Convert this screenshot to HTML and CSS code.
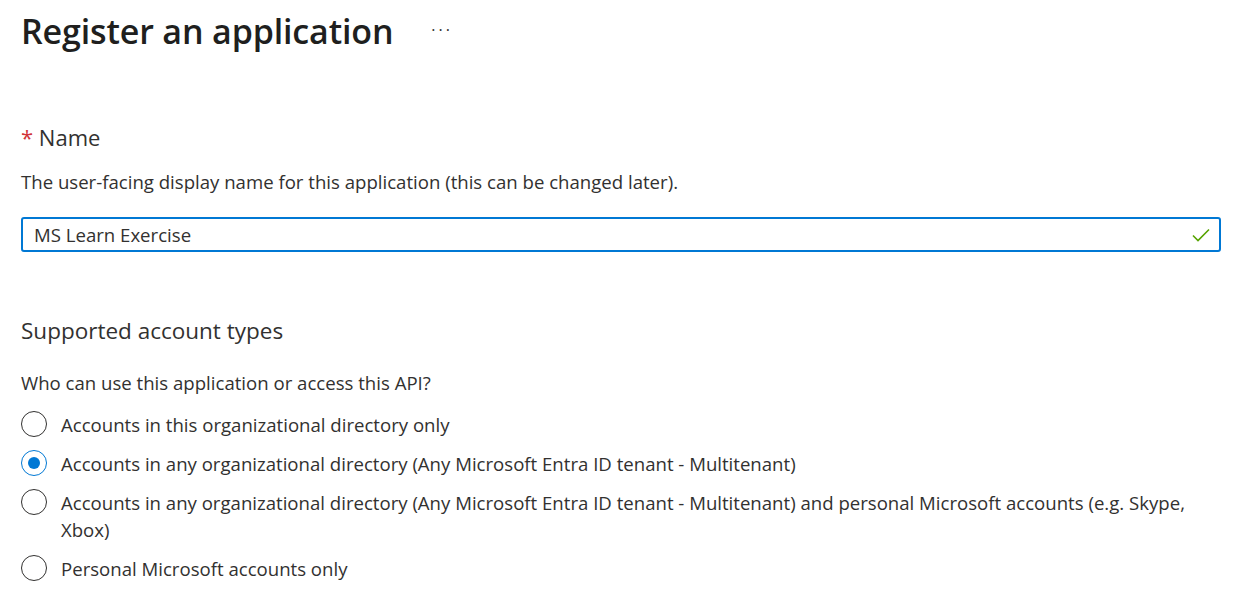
FILE: index.html
```html
<!DOCTYPE html>
<html lang="en">
<head>
<meta charset="utf-8">
<title>Register an application</title>
<link rel="stylesheet" href="styles.css">
</head>
<body>
<main class="page">
  <header class="page-header">
    <h1 class="page-title">Register an application</h1>
    <span class="more">&middot;&middot;&middot;</span>
  </header>

  <section class="field name-field">
    <h2 class="field-label"><span class="req">*</span> Name</h2>
    <p class="field-desc">The user-facing display name for this application (this can be changed later).</p>
    <div class="text-input">
      <span class="input-value">MS Learn Exercise</span>
      <svg class="check" width="18" height="14" viewBox="0 0 18 14" aria-hidden="true"><path d="M1 7.5 L6 12.5 L17 1.5" fill="none" stroke="#57a300" stroke-width="1.6"/></svg>
    </div>
  </section>

  <section class="field account-field">
    <h2 class="section-title">Supported account types</h2>
    <p class="question">Who can use this application or access this API?</p>
    <div class="radio-list">
      <div class="radio-row"><span class="radio"></span><span class="radio-text">Accounts in this organizational directory only</span></div>
      <div class="radio-row"><span class="radio checked"></span><span class="radio-text">Accounts in any organizational directory (Any Microsoft Entra ID tenant - Multitenant)</span></div>
      <div class="radio-row"><span class="radio"></span><span class="radio-text">Accounts in any organizational directory (Any Microsoft Entra ID tenant - Multitenant) and personal Microsoft accounts (e.g. Skype, Xbox)</span></div>
      <div class="radio-row"><span class="radio"></span><span class="radio-text">Personal Microsoft accounts only</span></div>
    </div>
  </section>
</main>
</body>
</html>
```

FILE: styles.css
```css
* { box-sizing: border-box; }
html, body { margin: 0; padding: 0; background: #ffffff; }
body {
  font-family: "Open Sans", "Noto Sans", sans-serif;
  color: #323130;
}
.page {
  padding: 8px 34px 0 21px;
}
.page-header {
  display: flex;
  align-items: center;
  gap: 38px;
  height: 46px;
}
.page-title {
  margin: 0;
  font-size: 34px;
  font-weight: 600;
  color: #201f1e;
  letter-spacing: -0.15px;
}
.more {
  font-size: 16px;
  color: #323130;
  letter-spacing: 3px;
  margin-top: -2px;
}
.field-label {
  margin: 69px 0 0;
  font-size: 22px;
  font-weight: 400;
  line-height: 28px;
}
.req { color: #d13438; }
.field-desc {
  margin: 19px 0 0;
  font-size: 18.6px;
  line-height: 24px;
}
.text-input {
  margin-top: 23px;
  height: 35px;
  border: 2px solid #0078d4;
  border-radius: 3px;
  display: flex;
  align-items: center;
  justify-content: space-between;
  padding: 0 9px 0 11px;
  font-size: 18.6px;
}
.check { display: block; }
.section-title {
  margin: 65px 0 0;
  font-size: 22.5px;
  font-weight: 400;
  line-height: 28px;
}
.question {
  margin: 26px 0 0;
  font-size: 18.6px;
  line-height: 24px;
}
.radio-list {
  margin-top: 16px;
  display: flex;
  flex-direction: column;
  gap: 12px;
}
.radio-row {
  display: flex;
  align-items: flex-start;
  gap: 14px;
  font-size: 18.6px;
  line-height: 27px;
}
.radio {
  flex: none;
  width: 26px;
  height: 26px;
  border: 1.5px solid #323130;
  border-radius: 50%;
  position: relative;
}
.radio.checked { border-color: #0078d4; }
.radio.checked::after {
  content: "";
  position: absolute;
  left: 50%;
  top: 50%;
  width: 12px;
  height: 12px;
  margin: -6px 0 0 -6px;
  border-radius: 50%;
  background: #0078d4;
}
```
